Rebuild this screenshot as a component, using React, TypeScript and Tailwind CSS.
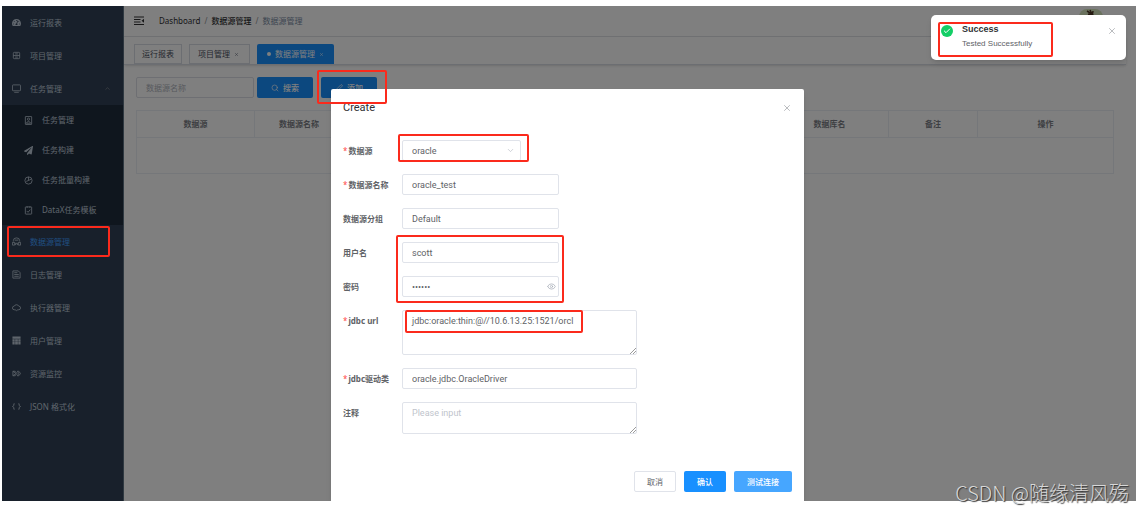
import { useState } from "react";
import type { ReactNode } from "react";
import { Check, ChevronDown, ChevronUp, Eye, PenLine, Search, X } from "lucide-react";
import { FaPaperPlane, FaTachometerAlt } from "react-icons/fa";

interface MenuItem {
  label: string;
  icon: ReactNode;
  active?: boolean;
  open?: boolean;
  children?: MenuItem[];
}

interface IconProps {
  children: ReactNode;
}

const LineIcon = ({ children }: IconProps) => (
  <svg
    viewBox="0 0 20 20"
    className="size-full"
    fill="none"
    stroke="currentColor"
    strokeWidth="1.8"
  >
    {children}
  </svg>
);

const menu: MenuItem[] = [
  { label: "运行报表", icon: <FaTachometerAlt className="size-full" /> },
  {
    label: "项目管理",
    icon: (
      <LineIcon>
        <rect x="3" y="3" width="14" height="14" rx="2" />
        <path d="M3 10h14M7 6.500h6M7 13.500h6" />
      </LineIcon>
    ),
  },
  {
    label: "任务管理",
    open: true,
    icon: (
      <LineIcon>
        <rect x="1" y="2" width="18" height="13" rx="1.5" />
        <path d="M5 18.500h10" />
      </LineIcon>
    ),
    children: [
      {
        label: "任务管理",
        icon: (
          <LineIcon>
            <rect x="3" y="1" width="14" height="18" rx="1" />
            <circle cx="10" cy="7" r="2.500" />
            <path d="M5 16l5-5 5 5M5 16h10" />
          </LineIcon>
        ),
      },
      { label: "任务构建", icon: <FaPaperPlane className="size-full" /> },
      {
        label: "任务批量构建",
        icon: (
          <LineIcon>
            <circle cx="10" cy="10" r="8" />
            <path d="M10 2v8l6-3M10 10l-5 2" />
          </LineIcon>
        ),
      },
      {
        label: "DataX任务模板",
        icon: (
          <LineIcon>
            <rect x="3" y="2" width="14" height="16" rx="1" />
            <path d="M7 1v3M13 1v3M6 11l3 3 5-6" />
          </LineIcon>
        ),
      },
    ],
  },
  {
    label: "数据源管理",
    active: true,
    icon: (
      <LineIcon>
        <path d="M3 10V8a7 6 0 0 1 14 0v2M1 18v-6h5v6zM14 18v-6h5v6zM8 18v-4h4v4M6 7h8" />
      </LineIcon>
    ),
  },
  {
    label: "日志管理",
    icon: (
      <LineIcon>
        <path d="M2 2h12l4 4v12H2zM5 6h7M5 10h10M5 14h10" />
      </LineIcon>
    ),
  },
  {
    label: "执行器管理",
    icon: (
      <LineIcon>
        <path d="M7 15H5a4 4 0 0 1 0-8 5.500 5.500 0 0 1 10 0 4 4 0 0 1 0 8h-2M7 15l3 2 3-2" />
      </LineIcon>
    ),
  },
  {
    label: "用户管理",
    icon: (
      <svg viewBox="0 0 20 20" className="size-full" fill="currentColor">
        <path d="M1 1h18v5H1zM1 7h5v5H1zM7 7h6v5H7zM14 7h5v5h-5zM1 13h5v6H1zM7 13h6v6H7zM14 13h5v6h-5z" />
      </svg>
    ),
  },
  {
    label: "资源监控",
    icon: (
      <LineIcon>
        <path d="M2 5v10l7-5zM2 5h5l4 5-4 5H2M12 5h3l4 5-4 5h-3l3-5z" />
      </LineIcon>
    ),
  },
  {
    label: "JSON 格式化",
    icon: (
      <LineIcon>
        <path d="M6 4H4v4l-3 2 3 2v4h2M14 4h2v4l3 2-3 2v4h-2" />
      </LineIcon>
    ),
  },
];

// red frame that stays above the modal mask
const Mark = ({ className }: { className: string }) => (
  <span
    className={`pointer-events-none absolute z-30 rounded-xs border-2 border-[#fb2a1c] ${className}`}
  />
);

const SidebarLink = ({ item }: { item: MenuItem }) => (
  <a
    href="#"
    className={`relative flex h-[33px] items-center gap-[9px] pl-[10px] ${
      item.active ? "text-[#409eff]" : "text-[#bfcbd9]"
    }`}
  >
    <span className={`size-[9px] ${item.active ? "text-[#bfcbd9]" : ""}`}>
      {item.icon}
    </span>
    <span>{item.label}</span>
    {item.open && <ChevronUp size={7} className="mr-3 ml-auto text-[#909399]" />}
    {item.active && <Mark className="inset-y-px right-[13px] left-[5px]" />}
  </a>
);

const Sidebar = () => (
  <nav className="w-[122px] shrink-0 border-r border-[#5f7283] bg-[#304156]">
    {menu.map((item) => (
      <div key={item.label}>
        <SidebarLink item={item} />
        {item.children && (
          <div className="bg-[#1f2d3d]">
            {item.children.map((child) => (
              <a
                key={child.label}
                href="#"
                className="flex h-[30px] items-center gap-[9px] pl-[22px] text-[#bfcbd9]"
              >
                <span className="size-[9px]">{child.icon}</span>
                <span>{child.label}</span>
              </a>
            ))}
          </div>
        )}
      </div>
    ))}
  </nav>
);

const Header = () => (
  <header className="flex h-[31px] items-center border-b border-[#e2e4e8] pr-[23px] pl-[10px]">
    <button type="button" aria-label="Toggle menu" className="size-[10px] text-[#303133]">
      <svg viewBox="0 0 20 20" fill="none" stroke="currentColor" strokeWidth="2">
        <path d="M0 2h20M0 7h13M0 12h13M0 17h20" />
        <path d="M20 5.500v8l-5-4z" fill="currentColor" stroke="none" />
      </svg>
    </button>
    <div className="ml-[15px] flex gap-1 text-[#303133]">
      <a href="#">Dashboard</a>
      <span className="text-[#909399]">/</span>
      <a href="#" className="font-medium">
        数据源管理
      </a>
      <span className="text-[#909399]">/</span>
      <span className="text-[#7a8ba3]">数据源管理</span>
    </div>
    <button
      type="button"
      aria-label="User"
      className="ml-auto size-6 overflow-hidden rounded-lg bg-[#d5e5bd]"
    >
      <svg viewBox="0 0 24 24" fill="none" stroke="#4b3423" strokeWidth="1.500">
        <path d="M8 2l5 3 4 4M11 1l2 4M14 2l-1 6M9 5l6 2" />
      </svg>
    </button>
  </header>
);

const Tabs = () => (
  <div className="flex h-7 items-end gap-[7px] border-b border-[#d8dce5] pl-[10px] shadow-sm">
    <a
      href="#"
      className="flex h-5 items-center border border-[#d8dce5] px-[7px] text-[#495060]"
    >
      运行报表
    </a>
    <a
      href="#"
      className="flex h-5 items-center gap-1 border border-[#d8dce5] pr-[10px] pl-2 text-[#495060]"
    >
      项目管理
      <X size={5} />
    </a>
    <a
      href="#"
      className="flex h-5 items-center gap-1 rounded-t-xs bg-[#1890ff] px-[10px] text-white"
    >
      <span className="size-1 rounded-full bg-white" />
      数据源管理
      <X size={5} />
    </a>
  </div>
);

const DataSourceTable = () => (
  <table className="mt-3 w-full table-fixed border border-[#ebeef5] text-[#7c7f86]">
    <colgroup>
      <col className="w-[118px]" />
      <col className="w-[89px]" />
      <col />
      <col className="w-[118px]" />
      <col className="w-[89px]" />
      <col className="w-[136px]" />
    </colgroup>
    <thead>
      <tr className="h-[27px] border-b border-[#ebeef5]">
        {["数据源", "数据源名称", "", "数据库名", "备注", "操作"].map((name, i) => (
          <th key={i} className="border-r border-[#ebeef5] p-0 font-bold">
            {name}
          </th>
        ))}
      </tr>
    </thead>
    <tbody>
      <tr className="h-9">
        <td colSpan={6} />
      </tr>
    </tbody>
  </table>
);

const inputClass =
  "block h-[21px] w-full rounded-xs border border-[#e0e3ea] bg-white px-[9px] font-['Roboto',sans-serif] text-[9px] text-[#606266] outline-none focus:border-[#1890ff]";
const textareaClass =
  "block w-full resize-none rounded-xs border border-[#e0e3ea] bg-white px-[9px] py-1 font-['Roboto',sans-serif] text-[9px] leading-3 text-[#606266] outline-none placeholder:text-[#c0c4cc] focus:border-[#1890ff]";

const Grip = () => (
  <svg
    viewBox="0 0 6 6"
    className="absolute right-px bottom-px size-[6px]"
    stroke="#707070"
    strokeWidth="0.7"
  >
    <path d="M0 6L6 0M3 6L6 3" />
  </svg>
);

interface FieldProps {
  id: string;
  label: string;
  required?: boolean;
  width: string;
  children: ReactNode;
}

const Field = ({ id, label, required, width, children }: FieldProps) => (
  <div className="flex items-start">
    <label
      htmlFor={id}
      className="flex h-[21px] w-[59px] shrink-0 items-center gap-px font-bold text-[#606266]"
    >
      {required && <span className="font-normal text-[#ff4949]">*</span>}
      {label}
    </label>
    <div className={`relative ${width}`}>{children}</div>
  </div>
);

const CreateDialog = () => {
  const [form, setForm] = useState({
    source: "oracle",
    name: "oracle_test",
    group: "Default",
    user: "scott",
    password: "oracle",
    url: "jdbc:oracle:thin:@//10.6.13.25:1521/orcl",
    driver: "oracle.jdbc.OracleDriver",
    comments: "",
  });

  const update = (key: keyof typeof form) => (e: { target: { value: string } }) =>
    setForm({ ...form, [key]: e.target.value });

  return (
    <div
      role="dialog"
      aria-label="Create"
      className="w-[473px] rounded-t-xs bg-white px-3 pt-3 pb-[9px] shadow-md"
    >
      <div className="flex items-center justify-between">
        <h2 className="font-['Roboto',sans-serif] text-[11px] leading-[14px] text-[#303133]">
          Create
        </h2>
        <button type="button" aria-label="Close" className="text-[#909399]">
          <X size={10} strokeWidth={1.5} />
        </button>
      </div>

      <form className="mt-[25px] space-y-[13px]">
        <Field id="source" label="数据源" required width="w-[119px]">
          <select
            id="source"
            value={form.source}
            onChange={update("source")}
            className={`${inputClass} appearance-none`}
          >
            <option value="oracle">oracle</option>
          </select>
          <ChevronDown
            size={9}
            strokeWidth={2}
            className="pointer-events-none absolute top-[6px] right-[6px] text-[#c0c4cc]"
          />
          <Mark className="-top-[6px] -right-2 -bottom-px -left-1" />
        </Field>
        <Field id="name" label="数据源名称" required width="w-[157px]">
          <input id="name" value={form.name} onChange={update("name")} className={inputClass} />
        </Field>
        <Field id="group" label="数据源分组" width="w-[157px]">
          <input id="group" value={form.group} onChange={update("group")} className={inputClass} />
        </Field>

        {/* Credentials */}
        <div className="relative space-y-[13px]">
          <Field id="user" label="用户名" width="w-[157px]">
            <input id="user" value={form.user} onChange={update("user")} className={inputClass} />
          </Field>
          <Field id="password" label="密码" width="w-[157px]">
            <input
              id="password"
              type="password"
              value={form.password}
              onChange={update("password")}
              className={inputClass}
            />
            <Eye
              size={9}
              strokeWidth={2}
              className="absolute top-[6px] right-[3px] text-[#a8adb8]"
            />
          </Field>
          <Mark className="-top-[7px] -bottom-[6px] left-[53px] w-[168px]" />
        </div>

        <Field id="url" label="jdbc url" required width="w-[235px]">
          <textarea
            id="url"
            value={form.url}
            onChange={update("url")}
            className={`${textareaClass} h-[45px]`}
          />
          <Grip />
          <Mark className="top-0 left-[3px] h-[23px] w-[178px]" />
        </Field>
        <Field id="driver" label="jdbc驱动类" required width="w-[235px]">
          <input
            id="driver"
            value={form.driver}
            onChange={update("driver")}
            className={inputClass}
          />
        </Field>
        <Field id="comments" label="注释" width="w-[235px]">
          <textarea
            id="comments"
            value={form.comments}
            onChange={update("comments")}
            placeholder="Please input"
            className={`${textareaClass} h-8`}
          />
          <Grip />
        </Field>
      </form>

      {/* Footer */}
      <div className="mt-[37px] flex justify-end gap-2">
        <button
          type="button"
          className="h-[21px] rounded-xs border border-[#e0e3ea] px-3 text-[#606266]"
        >
          取消
        </button>
        <button
          type="button"
          className="h-[21px] rounded-xs bg-[#1890ff] px-[13px] font-medium text-white"
        >
          确认
        </button>
        <button
          type="button"
          className="h-[21px] rounded-xs bg-[#46a6ff] px-[13px] font-medium text-white"
        >
          测试连接
        </button>
      </div>
    </div>
  );
};

const Toast = () => (
  <div
    role="alert"
    className="absolute top-[9px] right-[10px] z-20 flex h-[45px] w-[195px] items-start rounded-[5px] bg-white pt-2 pr-[9px] pl-[10px] font-['Liberation_Sans',sans-serif] shadow-md"
  >
    <span className="mt-[2px] flex size-3 items-center justify-center rounded-full bg-[#13ce66] text-white">
      <Check size={8} strokeWidth={3} />
    </span>
    <div className="ml-[9px]">
      <p className="text-[9px] leading-3 font-bold text-[#303133]">Success</p>
      <p className="mt-[3px] leading-3 text-[#606266]">Tested Successfully</p>
    </div>
    <button type="button" aria-label="Dismiss" className="mt-[3px] ml-auto text-[#909399]">
      <X size={10} strokeWidth={1.5} />
    </button>
    <Mark className="top-[7px] left-[7px] h-[35px] w-[115px]" />
  </div>
);

const App = () => (
  <div className="relative flex min-h-screen flex-col bg-white pt-[6px] pr-[9px] pb-3 pl-[2px] font-['Noto_Sans','Noto_Sans_CJK_SC',sans-serif] text-[8px] leading-3">
    <div className="relative flex flex-1 overflow-hidden bg-white pr-[10px]">
      <Sidebar />
      <main className="min-w-0 flex-1">
        <Header />
        <Tabs />
        <div className="p-3">
          <div className="flex items-center">
            <input
              aria-label="数据源名称"
              placeholder="数据源名称"
              className="h-[21px] w-[118px] rounded-xs border border-[#dcdfe6] px-[9px] outline-none placeholder:text-[#b0b4bc]"
            />
            <button
              type="button"
              className="ml-[3px] flex h-[21px] w-14 items-center justify-center gap-1 rounded-xs bg-[#1890ff] font-medium text-white"
            >
              <Search size={8} />
              搜索
            </button>
            <button
              type="button"
              className="relative ml-2 flex h-[21px] w-14 items-center justify-center gap-1 rounded-xs bg-[#1890ff] font-medium text-white"
            >
              <PenLine size={8} />
              添加
              <Mark className="-top-[7px] -right-[10px] -bottom-[6px] -left-1" />
            </button>
          </div>
          <DataSourceTable />
        </div>
      </main>

      <div className="absolute inset-0 z-10 flex justify-center bg-black/50 pt-[83px] pr-[3px]">
        <CreateDialog />
      </div>
      <Toast />
    </div>
    <p className="absolute right-4 bottom-2 z-30 font-['Noto_Sans_CJK_SC',sans-serif] text-[20px] leading-6 font-light text-[#d8d8d8] [text-shadow:1px_1px_1px_#333]">
      CSDN @随缘清风殇
    </p>
  </div>
);

export default App;
